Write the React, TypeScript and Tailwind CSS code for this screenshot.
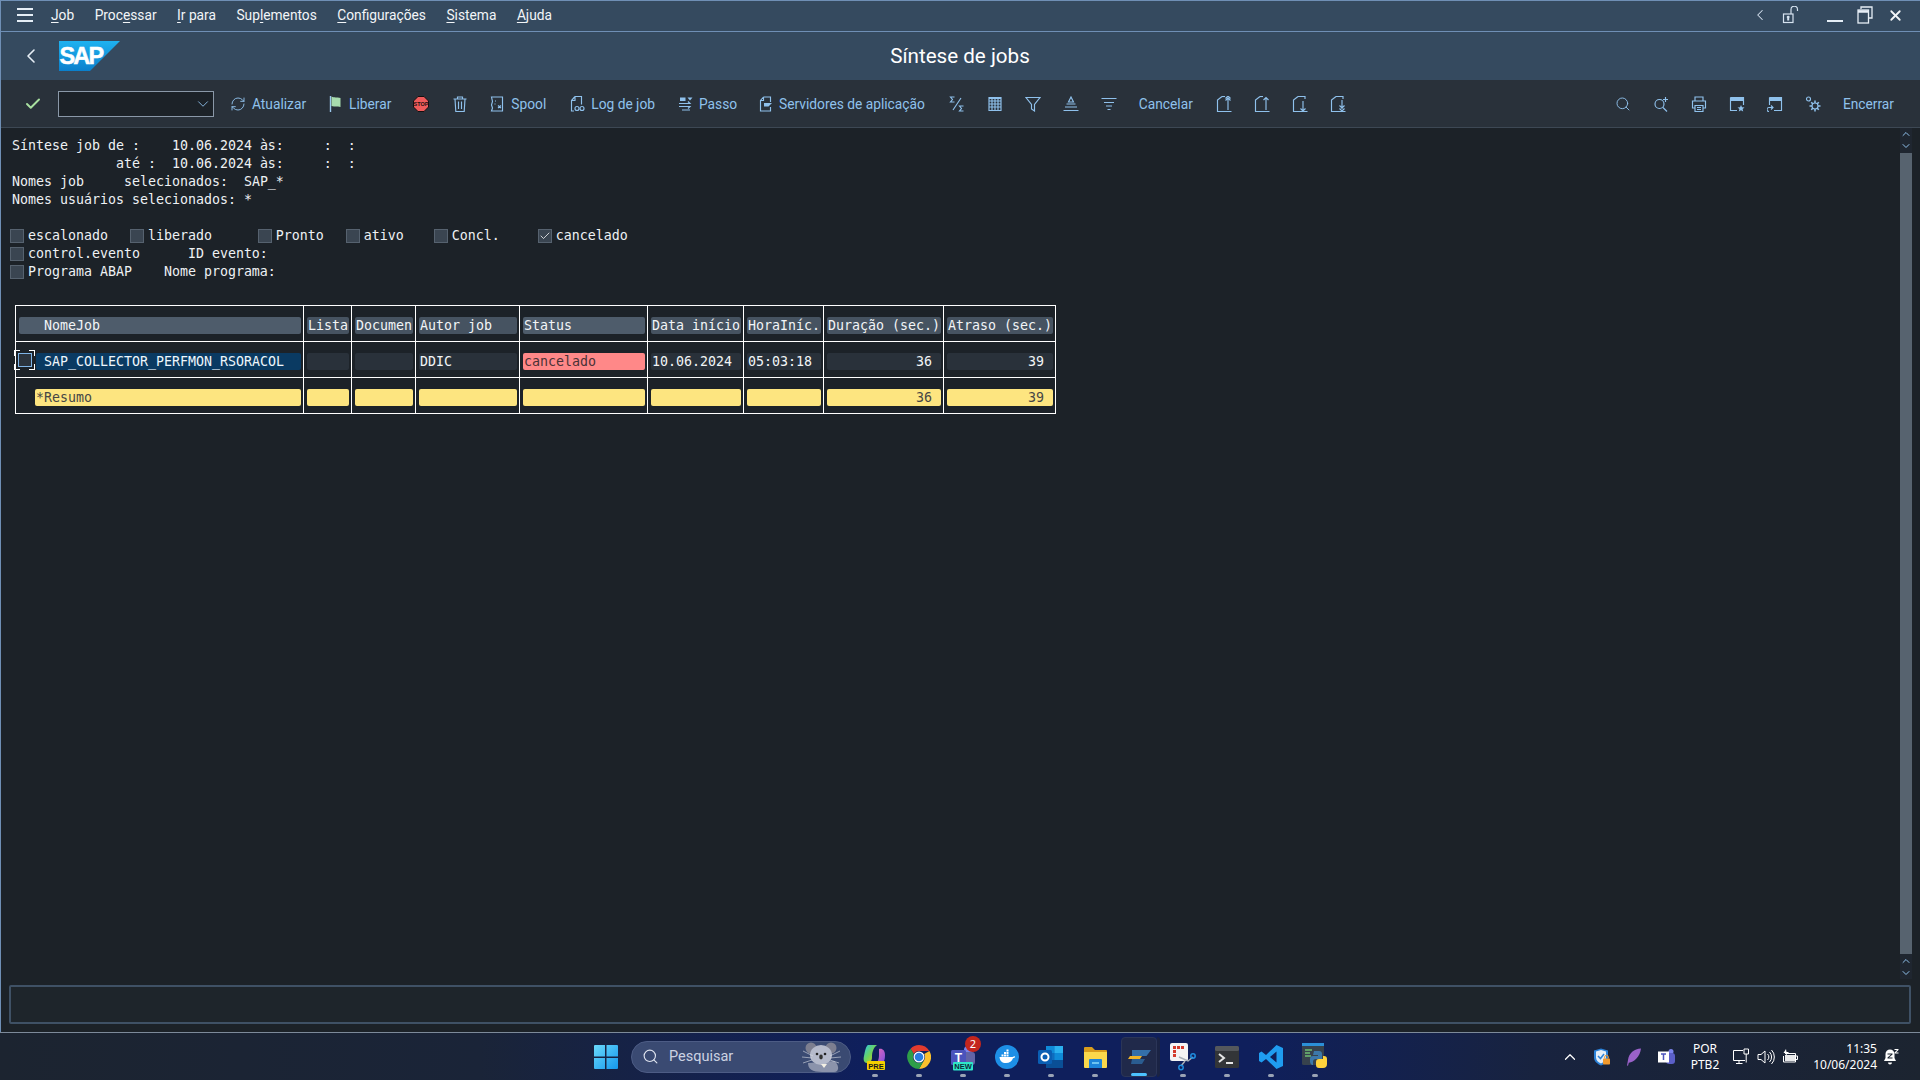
import React from 'react';
import { ChevronLeft, ChevronDown, ChevronUp, RefreshCw, Search, X, Check } from 'lucide-react';

const Ico: React.FC<{ children: React.ReactNode; className?: string; size?: number }> = ({ children, className = '', size = 16 }) => (
  <svg
    width={size}
    height={size}
    viewBox="0 0 16 16"
    fill="none"
    stroke="currentColor"
    strokeWidth={1.15}
    className={`shrink-0 ${className}`}
  >
    {children}
  </svg>
);

const FlagIcon = () => (
  <Ico>
    <path d="M2.500 0v16" stroke="#9cc8ee" strokeWidth={1.400} />
    <path d="M3.500 .5c3 1.500 5 .5 9 1.500v9c-3.500-1-5.500 0-9-1z" fill="#a8dcae" stroke="none" />
  </Ico>
);

const StopIcon = () => (
  <svg width={16} height={16} viewBox="0 0 16 16" className="shrink-0">
    <path d="M5 .5h6L15.500 5v6L11 15.500H5L.5 11V5z" fill="#ef5b5b" stroke="#141010" strokeWidth={1} />
    <text x={8} y={10} textAnchor="middle" fontSize={5.500} fontWeight={700} fontFamily="'Liberation Sans', sans-serif" fill="#1c1010">
      STOP
    </text>
  </svg>
);

const TrashIcon = () => (
  <Ico>
    <path d="M1.500 3h13M5.500 3V1h5v2M3 3l.8 12.500h8.400L13 3M6.500 5.500v7.500M9.500 5.500v7.500" />
  </Ico>
);

const SpoolIcon = () => (
  <Ico>
    <path d="M2.500 1h11v14h-11l1-3-1-3 1-3.500z" />
    <path d="M6 5h1M5.500 8h1M9 9.500l3 2.500M12 9.500l-3 2.500" />
  </Ico>
);

const LogIcon = () => (
  <Ico>
    <path d="M6 .5h6.500v8M6 .5L2.500 4.500V15H5M2.500 4.500H6V.5" />
    <circle cx={8} cy={12.500} r={2} />
    <circle cx={13} cy={12.500} r={2} />
  </Ico>
);

const PassoIcon = () => (
  <Ico>
    <path d="M2 1.500h5.500v3.500H2zM9.500 1.500h5L12 4.500z" fill="currentColor" stroke="none" />
    <path d="M1 7.500h11l-2-2M1 10.500h11l-2 2M4 14h8" />
  </Ico>
);

const ServerIcon = () => (
  <Ico>
    <path d="M5.500 1h7v5M5.500 1L2.500 4.500v10.500h10V11M5.500 1v3.500h-3" />
    <path d="M6 7h8l-3.500 3.500H6z" fill="currentColor" stroke="none" />
  </Ico>
);

const SumIcon = () => (
  <Ico>
    <path d="M5.500 1H1.500l2 2.500-2 2.500h4M14.500 10h-4l2 2.500-2 2.500h4M12 2L4 14" />
  </Ico>
);

const GridIcon = () => (
  <Ico>
    <path d="M2 1.500h12v13H2zM2 5h12M2 8h12M2 11h12M5 1.500v13M8 1.500v13M11 1.500v13" />
    <path d="M2 2h12" strokeWidth={2} />
  </Ico>
);

const FilterIcon = () => (
  <Ico>
    <path d="M1 1.500h14L9.500 8.500v6.500L6.500 13V8.500z" />
  </Ico>
);

const SumUpIcon = () => (
  <Ico>
    <path d="M8 1L5.500 6h5zM3.500 8h9M2 11h12M.5 14.500h15" />
  </Ico>
);

const SumDownIcon = () => (
  <Ico>
    <path d="M.5 2.500h15M3 6.500h10M5 10h6M6.500 13.500h3" />
  </Ico>
);

const PageIcon: React.FC<{ kind: 'first' | 'prev' | 'next' | 'last' }> = ({ kind }) => (
  <svg width={17} height={16} viewBox="0 0 17 16" fill="none" stroke="currentColor" strokeWidth={1.15} className="shrink-0">
    <path d="M6 .5L1.500 4v11.500h14" />
    {(kind === 'first' || kind === 'prev') && <path d="M6 .5h3" />}
    {(kind === 'next' || kind === 'last') && <path d="M6 .5h7V3" />}
    {kind === 'first' && <path d="M12 14V2M9.500 4.500L12 2l2.500 2.500M9.500 2.500L12 0l2.500 2.500" />}
    {kind === 'prev' && <path d="M12 14V1.500M9.500 4L12 1.500 14.500 4" />}
    {kind === 'next' && <path d="M11 5v10M8.500 12.500L11 15l2.500-2.500" />}
    {kind === 'last' && <path d="M12 4v9M9.500 9.500L12 12l2.500-2.500M9.500 12.500L12 15l2.500-2.500" />}
  </svg>
);

const FindNextIcon = () => (
  <Ico>
    <circle cx={6.500} cy={8} r={4.500} />
    <path d="M10 11.500l4 4M12.500 1v5M10 3.500h5" />
  </Ico>
);

const PrintIcon = () => (
  <Ico>
    <path d="M4 5V1h8v4M4 12H1.500V5h13v7H12M4 9.500h8v6H4zM6 11.500h4M6 13.500h4" />
  </Ico>
);

const LayoutStarIcon = () => (
  <Ico>
    <path d="M1.500 1.500h13V9M1.500 1.500V14.500H8" />
    <path d="M1.500 1.500h13v3.500h-13z" fill="currentColor" stroke="none" />
    <path d="M12 9l1 2.300 2.500.2-1.900 1.600.6 2.400-2.200-1.300-2.200 1.300.6-2.400-1.900-1.600 2.500-.2z" fill="currentColor" stroke="none" />
  </Ico>
);

const LayoutSwapIcon = () => (
  <Ico>
    <path d="M2.500 1.500h12v13H7M2.500 1.500V9" />
    <path d="M2.500 1.500h12v3.500h-12z" fill="currentColor" stroke="none" />
    <path d="M5.500 11.500H2a2 2 0 000 4M4 9.500l2 2-2 2" />
  </Ico>
);

const GearsIcon = () => (
  <Ico>
    <circle cx={3.500} cy={3} r={2} />
    <circle cx={10} cy={10} r={3} />
    <path d="M10 4.500V7M10 13v2.500M4.500 10H7M13 10h2.500M6.200 6.200l1.700 1.700M12.100 12.100l1.700 1.700M13.800 6.200l-1.700 1.700M7.900 12.100l-1.700 1.700" strokeWidth={1.500} />
  </Ico>
);

const LockIcon = () => (
  <svg width={18} height={18} viewBox="0 0 18 18" fill="none" stroke="#d5e2ef" strokeWidth={1.200} className="shrink-0">
    <rect x={1.500} y={8} width={9.500} height={8.500} />
    <path d="M6.200 9.800a1.300 1.300 0 011 2.300v2.400h-2v-2.400a1.300 1.300 0 011-2.300z" fill="#d5e2ef" stroke="none" />
    <path d="M9 8V3.500a3.200 3.200 0 016.500 0V5" />
  </svg>
);

const RestoreIcon = () => (
  <svg width={16} height={18} viewBox="0 0 16 18" fill="none" stroke="#e6eef6" strokeWidth={1.300} className="shrink-0">
    <path d="M4 3V1h11v11h-3" />
    <rect x={1} y={4} width={10.500} height={13} />
    <path d="M1 5.500h10.500" strokeWidth={2.500} />
  </svg>
);

const SapLogo = () => (
  <svg width={62} height={30} viewBox="0 0 62 30" className="shrink-0">
    <defs>
      <linearGradient id="sapGrad" x1="0" y1="0" x2="0" y2="1">
        <stop offset="0" stopColor="#1fb2f0" />
        <stop offset="1" stopColor="#0a80cc" />
      </linearGradient>
    </defs>
    <path d="M0 0h61L31 30H0z" fill="url(#sapGrad)" />
    <text x={0.5} y={23} fontFamily="'Liberation Sans', sans-serif" fontWeight={700} fontSize={23.500} letterSpacing={-1.800} fill="#ffffff" stroke="#ffffff" strokeWidth={0.5}>
      SAP
    </text>
  </svg>
);

const ToolBtn: React.FC<{ icon: React.ReactNode; label: string; gap: string; className: string }> = ({ icon, label, gap, className }) => (
  <div className={`flex items-center ${gap} ${className}`}>
    {icon}
    <span className="text-[13.75px] pt-px whitespace-nowrap">{label}</span>
  </div>
);

const Mnemonic: React.FC<{ before?: string; u: string; after: string }> = ({ before = '', u, after }) => (
  <span className="whitespace-pre">
    {before}
    <span className="underline underline-offset-2 decoration-1">{u}</span>
    {after}
  </span>
);

const CheckBox: React.FC<{ checked?: boolean }> = ({ checked }) => (
  <span className="inline-flex w-[2ch] h-[18px] items-center shrink-0">
    <span className="flex items-center justify-center w-[14px] h-[14px] -ml-[2px] bg-[#3a4551] border border-[#56626f] text-white">
      {checked && <Check size={12} strokeWidth={1.500} />}
    </span>
  </span>
);

const CbLabel: React.FC<{ w: string; label: string; checked?: boolean }> = ({ w, label, checked }) => (
  <span className={`flex ${w}`}>
    <CheckBox checked={checked} />
    <span className="whitespace-pre">{label}</span>
  </span>
);

const barBase = 'h-[17px] rounded-[2px] flex items-center overflow-hidden whitespace-pre leading-[17px]';

const headers: { label: string; bar: string }[] = [
  { label: 'NomeJob', bar: 'pl-[25px] bg-[#4e5c6b]' },
  { label: 'Lista', bar: 'pl-[1px] bg-[#465361]' },
  { label: 'Documen', bar: 'pl-[1px] bg-[#465361]' },
  { label: 'Autor job', bar: 'pl-[1px] bg-[#465361]' },
  { label: 'Status', bar: 'pl-[1px] bg-[#4e5c6b]' },
  { label: 'Data início', bar: 'pl-[1px] bg-[#465361]' },
  { label: 'HoraIníc.', bar: 'pl-[1px] bg-[#465361]' },
  { label: 'Duração (sec.)', bar: 'pl-[1px] bg-[#465361]' },
  { label: 'Atraso (sec.)', bar: 'pl-[1px] bg-[#465361]' },
];

const cellWrap = 'border-r border-b border-white h-[36px] pt-[11px] pl-[3px] pr-[2px]';

const TableCell: React.FC<{ bar: string; children?: React.ReactNode }> = ({ bar, children }) => (
  <div className={cellWrap}>
    <div className={`${barBase} ${bar}`}>{children}</div>
  </div>
);

const JobTable = () => (
  <div className="relative mt-[24px] ml-[3px] w-[1041px] border-t border-l border-white grid grid-cols-[288px_48px_64px_104px_128px_96px_80px_120px_112px]">
    {headers.map((h) => (
      <TableCell key={h.label} bar={`${h.bar} text-[#f2f5f7]`}>
        {h.label}
      </TableCell>
    ))}

    <TableCell bar="ml-[17px] pl-[8px] bg-[#0a3a62] text-[#eef6fc]">SAP_COLLECTOR_PERFMON_RSORACOL</TableCell>
    <TableCell bar="bg-[#29313a]" />
    <TableCell bar="bg-[#29313a]" />
    <TableCell bar="pl-[1px] bg-[#29313a] text-[#f2f5f7]">DDIC</TableCell>
    <TableCell bar="pl-[1px] bg-[#ff8888] text-[#4a3236]">cancelado</TableCell>
    <TableCell bar="pl-[1px] bg-[#29313a] text-[#f2f5f7]">10.06.2024</TableCell>
    <TableCell bar="pl-[1px] bg-[#29313a] text-[#f2f5f7]">05:03:18</TableCell>
    <TableCell bar="justify-end pr-[9px] bg-[#29313a] text-[#f2f5f7]">36</TableCell>
    <TableCell bar="justify-end pr-[9px] bg-[#29313a] text-[#f2f5f7]">39</TableCell>

    <TableCell bar="ml-[16px] pl-[1px] bg-[#fde580] text-[#454545]">*Resumo</TableCell>
    <TableCell bar="bg-[#fde580]" />
    <TableCell bar="bg-[#fde580]" />
    <TableCell bar="bg-[#fde580]" />
    <TableCell bar="bg-[#fde580]" />
    <TableCell bar="bg-[#fde580]" />
    <TableCell bar="bg-[#fde580]" />
    <TableCell bar="justify-end pr-[9px] bg-[#fde580] text-[#454545]">36</TableCell>
    <TableCell bar="justify-end pr-[9px] bg-[#fde580] text-[#454545]">39</TableCell>

    {/* row selector over the first data cell */}
    <div className="absolute left-[-2px] top-[44px] w-[21px] h-[20px]">
      <div className="absolute left-[4px] top-[3px] w-[14px] h-[14px] bg-[#2b333c] border border-[#7fb4e6]" />
      <div className="absolute left-0 top-0 w-[6px] h-[6px] border-l border-t border-white" />
      <div className="absolute right-0 top-0 w-[6px] h-[6px] border-r border-t border-white" />
      <div className="absolute left-0 bottom-0 w-[6px] h-[6px] border-l border-b border-white" />
      <div className="absolute right-0 bottom-0 w-[6px] h-[6px] border-r border-b border-white" />
    </div>
  </div>
);

const Dot = () => <span className="absolute bottom-[3px] left-1/2 -translate-x-1/2 w-[6px] h-[3px] rounded-full bg-[#9aa3b5]" />;

const TaskIcon: React.FC<{ children: React.ReactNode; active?: boolean }> = ({ children, active }) => (
  <div className="relative w-[44px] h-[47px] flex items-center justify-center">
    {active && (
      <>
        <span className="absolute left-[4px] top-[4px] w-[36px] h-[40px] rounded-[4px] bg-[#20294a] border border-[#2b3557]" />
        <span className="absolute left-[40px] top-[4px] w-[3px] h-[40px] rounded-r-[3px] bg-[#1a2344]" />
      </>
    )}
    <span className="relative flex">{children}</span>
    {!active && <Dot />}
    {active && <span className="absolute bottom-[4px] left-1/2 -translate-x-1/2 w-[16px] h-[3px] rounded-full bg-[#4cc2ff]" />}
  </div>
);

const Copilot = () => (
  <svg width={26} height={28} viewBox="0 0 26 28">
    <defs>
      <linearGradient id="copA" x1="0" y1="0" x2="1" y2="1">
        <stop offset="0" stopColor="#2bc5e8" />
        <stop offset="0.5" stopColor="#6fd35a" />
        <stop offset="1" stopColor="#f5c518" />
      </linearGradient>
      <linearGradient id="copB" x1="0" y1="0" x2="1" y2="1">
        <stop offset="0" stopColor="#f06bb8" />
        <stop offset="1" stopColor="#7b4fe0" />
      </linearGradient>
    </defs>
    <path d="M6 2h9c-4 3-5 8-5 12 0 4-2 6-5 6-3 0-4-3-3-7C3 8 4 3 6 2z" fill="url(#copA)" />
    <path d="M17 6c3-1 6 1 6 6s-1 9-6 9h-5c4-1 5-5 5-9z" fill="url(#copB)" />
    <rect x={5} y={18} width={18} height={9} rx={1} fill="#f5d000" />
    <text x={14} y={25.500} textAnchor="middle" fontSize={7.500} fontWeight={700} fontFamily="'Liberation Sans', sans-serif" fill="#1a1a1a">PRE</text>
  </svg>
);

const Chrome = () => (
  <svg width={24} height={24} viewBox="0 0 24 24">
    <path d="M12 0a12 12 0 0110.400 6H12a6 6 0 00-5.200 3L3.600 3.700A12 12 0 0112 0z" fill="#e33b2e" />
    <path d="M22.400 6A12 12 0 0112 24l5.200-9a6 6 0 000-6z" fill="#fbc02d" />
    <path d="M12 24A12 12 0 013.600 3.700L6.800 9a6 6 0 005.200 9 6 6 0 005.200-3z" fill="#2e9e48" />
    <circle cx={12} cy={12} r={5.500} fill="#fff" />
    <circle cx={12} cy={12} r={4.300} fill="#2a7de1" />
  </svg>
);

const Teams = () => (
  <div className="relative w-[26px] h-[28px]">
    <svg width={26} height={28} viewBox="0 0 26 28">
      <circle cx={18} cy={7} r={4} fill="#7b83eb" />
      <rect x={12} y={9} width={13} height={13} rx={3} fill="#6264a7" />
      <rect x={1} y={7} width={15} height={15} rx={1.500} fill="#4b53bc" />
      <text x={8.500} y={19} textAnchor="middle" fontSize={12} fontWeight={700} fontFamily="'Liberation Sans', sans-serif" fill="#fff">T</text>
      <rect x={3} y={19} width={20} height={8.500} rx={1} fill="#2ee6c8" />
      <text x={13} y={26} textAnchor="middle" fontSize={7.500} fontWeight={700} fontFamily="'Liberation Sans', sans-serif" fill="#0c2a3a">NEW</text>
    </svg>
    <span className="absolute -top-[7px] -right-[5px] w-[16px] h-[16px] rounded-full bg-[#c4261d] text-white text-[11px] leading-[16px] text-center font-['Noto_Sans',sans-serif]">2</span>
  </div>
);

const Docker = () => (
  <svg width={24} height={24} viewBox="0 0 24 24">
    <circle cx={12} cy={12} r={12} fill="#1d8fe6" />
    <path d="M4.500 12h13c1 0 1.500-.8 2-1 .4.500.6 1 .3 1.500-.6.600-1.300.700-1.800.700-1 3-3.500 4.800-7 4.800-4 0-6-2-6.500-6z" fill="#fff" />
    <path d="M6.500 9.500h2v2h-2zM9 9.500h2v2H9zM11.500 9.500h2v2h-2zM9 7h2v2H9zM11.500 7h2v2h-2zM11.500 4.500h2v2h-2z" fill="#fff" />
  </svg>
);

const Outlook = () => (
  <svg width={26} height={24} viewBox="0 0 26 24">
    <rect x={8} y={1} width={17} height={22} rx={1.500} fill="#0f6cbd" />
    <rect x={8} y={1} width={8.500} height={7} fill="#0f8ad8" />
    <rect x={16.500} y={1} width={8.500} height={7} fill="#2bb0ef" />
    <rect x={16.500} y={8} width={8.500} height={7} fill="#0f8ad8" />
    <path d="M8 15h17v7a1 1 0 01-1 1H8z" fill="#0a4f96" />
    <rect x={0} y={5} width={14} height={14} rx={1.500} fill="#0a5fb4" />
    <circle cx={7} cy={12} r={3.500} fill="none" stroke="#fff" strokeWidth={2} />
  </svg>
);

const Folder = () => (
  <svg width={25} height={24} viewBox="0 0 25 24">
    <path d="M1 3a1 1 0 011-1h7l3 3h11a1 1 0 011 1v2H1z" fill="#d99d1c" />
    <path d="M1 7h23v15a1 1 0 01-1 1H2a1 1 0 01-1-1z" fill="#fbd84b" />
    <path d="M6 15a1 1 0 011-1h11a1 1 0 011 1v8H6z" fill="#1d84d8" />
    <rect x={9} y={17} width={7} height={2} fill="#6cc3f0" />
  </svg>
);

const SapGui = () => (
  <svg width={24} height={16} viewBox="0 0 24 16">
    <path d="M5 1h19l-4.500 6H5z" fill="#3b87c9" opacity={0.75} />
    <path d="M3 7h12l-2 3H1z" fill="#f0b429" />
    <path d="M5 10h13l-3 5H4z" fill="#2d6ea8" opacity={0.75} />
  </svg>
);

const Snip = () => (
  <svg width={26} height={28} viewBox="0 0 26 28">
    <rect x={0} y={0} width={18} height={18} rx={2} fill="#f4f4f4" />
    <path d="M3 3h3v3H3zM7 3h3v3H7zM11 3h3v3h-3zM3 7h3v3H3zM3 11h3v3H3z" fill="#d33a2c" />
    <path d="M9 14l9 4 5-4M15 18l-4 5" fill="none" stroke="#a8b0b8" strokeWidth={1.500} />
    <circle cx={23} cy={13} r={2.200} fill="none" stroke="#1f8fe0" strokeWidth={1.500} />
    <circle cx={11} cy={24.500} r={2.200} fill="none" stroke="#1f8fe0" strokeWidth={1.500} />
  </svg>
);

const Terminal = () => (
  <svg width={24} height={22} viewBox="0 0 24 22">
    <rect x={0} y={0} width={24} height={22} rx={1.500} fill="#333538" />
    <rect x={0} y={0} width={24} height={5} rx={1.500} fill="#55585c" />
    <path d="M4 8l5 4-5 4" fill="none" stroke="#e6e6e6" strokeWidth={2} />
    <path d="M11 17h7" stroke="#e6e6e6" strokeWidth={2} />
  </svg>
);

const VsCode = () => (
  <svg width={24} height={24} viewBox="0 0 24 24">
    <path d="M17.500 0L24 3v18l-6.500 3L7 14l-4.500 3.500L0 16V8l2.500-1.500L7 10zM17.500 6.500L11 12l6.500 5.500z" fill="#1f9cf0" />
  </svg>
);

const PyIcon = () => (
  <svg width={26} height={28} viewBox="0 0 26 28">
    <rect x={0} y={0} width={22} height={22} rx={1.500} fill="#37424d" />
    <rect x={0} y={0} width={22} height={3} fill="#2b8fd8" />
    <path d="M3 7h7M3 10h5M3 13h6" stroke="#6fbf73" strokeWidth={1.500} />
    <path d="M12 8h5a3 3 0 013 3v5h-6a3 3 0 00-3 3v3h-1a4 4 0 01-2-3v-3a3 3 0 013-3h5v-1h-5z" fill="#3c78aa" />
    <path d="M21 13h1a3 3 0 013 3v5a4 4 0 01-4 4h-4a3 3 0 01-3-3v-3a3 3 0 013-3h4z" fill="#ffd23c" />
  </svg>
);

const Koala = () => (
  <svg width={44} height={30} viewBox="0 0 44 30" className="shrink-0">
    <path d="M22 30c-10 0-14-3-14-9l26-2c5 3 6 11 0 11z" fill="#8b93ab" />
    <circle cx={11} cy={6} r={5.500} fill="#7d7f90" />
    <circle cx={31} cy={6} r={5.500} fill="#7d7f90" />
    <ellipse cx={21} cy={13} rx={11} ry={10} fill="#b5bacb" />
    <circle cx={17} cy={12} r={1.300} fill="#222" />
    <circle cx={25} cy={12} r={1.300} fill="#222" />
    <ellipse cx={21} cy={15} rx={1.800} ry={2.400} fill="#333" />
    <path d="M21 22h6l-3 4z" fill="#f4f0e4" />
    <path d="M3 9l10 5M2 15l10 1M3 21l9-3M30 14l10-5M30 16l11-1M30 18l9 3" stroke="#d8dbe4" strokeWidth={0.600} />
  </svg>
);

const ShieldTray = () => (
  <svg width={18} height={18} viewBox="0 0 18 18">
    <path d="M1 2.500l7-2 7 2v7c0 4-3.500 6.500-7 8-3.500-1.500-7-4-7-8z" fill="#2b82d9" />
    <path d="M3 3.500l5-1.500 5 1.500v6c0 3-2.500 4.800-5 6-2.500-1.200-5-3-5-6z" fill="#e4eef8" />
    <path d="M5 8l2.500 2.500L11 6" fill="none" stroke="#2b82d9" strokeWidth={1.500} />
    <rect x={10} y={10.500} width={7} height={6} rx={0.800} fill="#f29a2e" />
    <path d="M11.700 10.500V9a1.800 1.800 0 013.600 0v1.500" fill="none" stroke="#f29a2e" strokeWidth={1} />
  </svg>
);

const Feather = () => (
  <svg width={16} height={18} viewBox="0 0 16 18">
    <path d="M15 .5C8 1 3 5 2 12l-1 5.500 1 .2.800-3C8 14 14 9 15 .5z" fill="#9a62c9" />
  </svg>
);

const TeamsTray = () => (
  <svg width={17} height={17} viewBox="0 0 17 17">
    <circle cx={13} cy={3.500} r={2.500} fill="#7b83eb" />
    <rect x={8} y={5} width={9} height={11} rx={3} fill="#5b5fc7" />
    <rect x={0} y={3.500} width={11} height={11} fill="#ffffff" />
    <path d="M3 6h5M5.500 6v6" stroke="#4b53bc" strokeWidth={1.500} />
  </svg>
);

const MonitorTray = () => (
  <svg width={17} height={17} viewBox="0 0 17 17" fill="none" stroke="#fff" strokeWidth={1}>
    <path d="M10 2.500H.5V12.500H12M6 12.500v2.500M3 15.500h6.500M11 1h4.500v5H11zM13.200 6v8.500" />
  </svg>
);

const SpeakerTray = () => (
  <svg width={18} height={16} viewBox="0 0 18 16" fill="none" stroke="#fff" strokeWidth={1}>
    <path d="M1 5.500h3L8 2v12l-4-3.500H1zM10.500 5a4 4 0 010 6M12.500 3a7 7 0 010 10M14.500 1a10 10 0 010 14" />
  </svg>
);

const BatteryTray = () => (
  <svg width={17} height={16} viewBox="0 0 17 16" fill="none" stroke="#fff" strokeWidth={1}>
    <path d="M3 4.500h10.500v8.500H1.500V7M13.500 7h2v3.500h-2" />
    <path d="M4 0L1.500 4H4.500L3 7.500 7 3H4.500z" fill="#fff" stroke="none" />
    <path d="M3 6h10v6H3z" fill="#fff" fillOpacity={0.9} stroke="none" />
  </svg>
);

const BellTray = () => (
  <svg width={18} height={18} viewBox="0 0 18 18" fill="#fff">
    <path d="M7 1.500a4.500 4.500 0 00-4.500 4.500v4L1 13h12l-1.500-3V6A4.500 4.500 0 007 1.500z" />
    <path d="M5 14.500h4a2 2 0 01-4 0z" />
    <path d="M11.500 1h4v1l-2.500 2.500h2.500v1h-4v-1L14 2h-2.500z" />
    <path d="M4.500 5.500h5v1L6 9.500h3.500v1h-5v-1L8 6.500H4.500z" fill="#1c2430" />
  </svg>
);

export default function App() {
  return (
    <div className="w-[1920px] h-[1080px] overflow-hidden flex flex-col bg-[#1c2228] font-['Roboto',sans-serif] text-white">
      <div className="flex-1 min-h-0 flex flex-col border-l border-t border-[#6f8fb5]">
        {/* menu bar */}
        <div className="relative h-[31px] shrink-0 flex items-center pb-[2px] bg-[#354a5f] border-b border-[#6f8fb5] text-[13.75px] text-[#f2f5f8]">
          <div className="ml-[16px] w-[16px] flex flex-col gap-[4px]">
            <span className="h-[2px] bg-[#e6eef6]" />
            <span className="h-[2px] bg-[#e6eef6]" />
            <span className="h-[2px] bg-[#e6eef6]" />
          </div>
          <div className="flex ml-[18px] gap-[20.5px]">
            <Mnemonic u="J" after="ob" />
            <Mnemonic before="Proc" u="e" after="ssar" />
            <Mnemonic u="I" after="r para" />
            <Mnemonic before="Sup" u="l" after="ementos" />
            <Mnemonic u="C" after="onfigurações" />
            <Mnemonic u="S" after="istema" />
            <Mnemonic u="A" after="juda" />
          </div>
          <div className="ml-auto flex items-center pr-[16px]">
            <ChevronLeft size={18} strokeWidth={1.400} className="text-[#d5e2ef]" />
            <div className="ml-[13px]"><LockIcon /></div>
            <div className="ml-[27px] mt-[12px] w-[16px] h-[2px] bg-[#e6eef6]" />
            <div className="ml-[14px]"><RestoreIcon /></div>
            <X size={17} strokeWidth={2.500} className="ml-[14px] text-[#f2f5f8]" />
          </div>
        </div>

        {/* title bar */}
        <div className="h-[48px] shrink-0 grid grid-cols-[1fr_auto_1fr] items-center bg-[#354a5f]">
          <div className="flex items-center">
            <ChevronLeft size={24} strokeWidth={1.600} className="ml-[18px] text-[#e6eef6]" />
            <div className="ml-[16px]"><SapLogo /></div>
          </div>
          <div className="text-[20.6px] text-white -ml-px">Síntese de jobs</div>
          <div />
        </div>

        {/* toolbar */}
        <div className="h-[48px] shrink-0 flex items-center bg-[#29313a] border-b border-[#3d4854] text-[#8fc1ec]">
          <Check size={18} strokeWidth={2.600} className="ml-[23px] text-[#a8e0a0]" />
          <div className="ml-[16px] w-[156px] h-[26px] flex items-center justify-end pr-[1px] border border-[#8a98a8] bg-[#1c2228]">
            <ChevronDown size={18} strokeWidth={1.200} className="text-[#8fc1ec]" />
          </div>
          <ToolBtn className="ml-[16px]" gap="gap-[6px]" icon={<RefreshCw size={16} strokeWidth={1.400} />} label="Atualizar" />
          <ToolBtn className="ml-[22px]" gap="gap-[5px]" icon={<FlagIcon />} label="Liberar" />
          <div className="ml-[22px]"><StopIcon /></div>
          <div className="ml-[23px]"><TrashIcon /></div>
          <ToolBtn className="ml-[21px]" gap="gap-[6px]" icon={<SpoolIcon />} label="Spool" />
          <ToolBtn className="ml-[23px]" gap="gap-[6px]" icon={<LogIcon />} label="Log de job" />
          <ToolBtn className="ml-[23px]" gap="gap-[5px]" icon={<PassoIcon />} label="Passo" />
          <ToolBtn className="ml-[21px]" gap="gap-[5px]" icon={<ServerIcon />} label="Servidores de aplicação" />
          <div className="ml-[24px]"><SumIcon /></div>
          <div className="ml-[22px]"><GridIcon /></div>
          <div className="ml-[22px]"><FilterIcon /></div>
          <div className="ml-[22px]"><SumUpIcon /></div>
          <div className="ml-[22px]"><SumDownIcon /></div>
          <span className="ml-[22px] pt-px text-[13.75px]">Cancelar</span>
          <div className="ml-[23px]"><PageIcon kind="first" /></div>
          <div className="ml-[21px]"><PageIcon kind="prev" /></div>
          <div className="ml-[21px]"><PageIcon kind="next" /></div>
          <div className="ml-[21px]"><PageIcon kind="last" /></div>
          <div className="ml-auto flex items-center gap-[22px] pr-[26px]">
            <Search size={16} strokeWidth={1.400} />
            <FindNextIcon />
            <PrintIcon />
            <LayoutStarIcon />
            <LayoutSwapIcon />
            <GearsIcon />
            <span className="pt-px text-[13.75px]">Encerrar</span>
          </div>
        </div>

        {/* work area */}
        <div className="flex-1 min-h-0 flex pl-[8px] pr-[9px] pb-[8px]">
          <div className="flex-1 min-w-0 flex flex-col pt-[9px]">
            <div className="flex-1 min-h-0 flex">
              <div className="flex-1 min-w-0 pl-[3px] font-['DejaVu_Sans_Mono',monospace] text-[13.29px] leading-[18px] text-[#eef1f4]">
                <div className="whitespace-pre">Síntese job de :    10.06.2024 às:     :  :</div>
                <div className="whitespace-pre">             até :  10.06.2024 às:     :  :</div>
                <div className="whitespace-pre">Nomes job     selecionados:  SAP_*</div>
                <div className="whitespace-pre">Nomes usuários selecionados: *</div>
                <div className="h-[18px]" />
                <div className="flex">
                  <CbLabel w="w-[15ch]" label="escalonado" />
                  <CbLabel w="w-[16ch]" label="liberado" />
                  <CbLabel w="w-[11ch]" label="Pronto" />
                  <CbLabel w="w-[11ch]" label="ativo" />
                  <CbLabel w="w-[13ch]" label="Concl." />
                  <CbLabel w="w-[11ch]" label="cancelado" checked />
                </div>
                <div className="flex">
                  <CheckBox />
                  <span className="whitespace-pre">control.evento      ID evento:</span>
                </div>
                <div className="flex">
                  <CheckBox />
                  <span className="whitespace-pre">Programa ABAP    Nome programa:</span>
                </div>
                <JobTable />
              </div>

              {/* scrollbar */}
              <div className="w-[12px] -mr-[1px] -mt-[9px] -mb-[3px] flex flex-col items-center text-[#8fc1ec] bg-[#1f2630]">
                <ChevronUp size={12} strokeWidth={2} />
                <ChevronDown size={12} strokeWidth={2} />
                <div className="flex-1 w-[12px] mt-[1px] bg-[#57636f]" />
                <ChevronUp size={12} strokeWidth={2} className="mt-[1px]" />
                <ChevronDown size={12} strokeWidth={2} />
              </div>
            </div>
            <div className="mt-[9px] h-[39px] shrink-0 border-2 border-[#3f5165] rounded-[2px] bg-[#1e252b]" />
          </div>
        </div>
      </div>

      {/* taskbar */}
      <div className="h-[48px] shrink-0 flex items-center border-t border-[#7d8a9a] bg-[linear-gradient(90deg,#1c2430_0%,#1a2438_25%,#0f1f5c_45%,#0f1f5c_65%,#18233f_80%,#1c2430_100%)]">
        <svg width={24} height={24} viewBox="0 0 24 24" className="ml-[594px] shrink-0">
          <defs>
            <linearGradient id="winGrad" x1="0" y1="0" x2="1" y2="1">
              <stop offset="0" stopColor="#6ad9fb" />
              <stop offset="1" stopColor="#1497ec" />
            </linearGradient>
          </defs>
          <path d="M0 1a1 1 0 011-1h10v11.500H0zM12.500 0H23a1 1 0 011 1v10.500H12.500zM0 13h11v11H1a1 1 0 01-1-1zM12.500 13H24v10a1 1 0 01-1 1H12.500z" fill="url(#winGrad)" />
        </svg>
        <div className="ml-[13px] w-[220px] h-[32px] flex items-center rounded-full bg-[#3a4a72] border border-[#4d5c85] pl-[10px] pr-[6px]">
          <Search size={17} strokeWidth={1.600} className="text-[#dfe4ef]" />
          <span className="ml-[10px] text-[14.5px] text-[#ccd2e2]">Pesquisar</span>
          <div className="ml-auto"><Koala /></div>
        </div>
        <div className="ml-[2px] flex items-center">
          <TaskIcon><Copilot /></TaskIcon>
          <TaskIcon><Chrome /></TaskIcon>
          <TaskIcon><Teams /></TaskIcon>
          <TaskIcon><Docker /></TaskIcon>
          <TaskIcon><Outlook /></TaskIcon>
          <TaskIcon><Folder /></TaskIcon>
          <TaskIcon active><SapGui /></TaskIcon>
          <TaskIcon><Snip /></TaskIcon>
          <TaskIcon><Terminal /></TaskIcon>
          <TaskIcon><VsCode /></TaskIcon>
          <TaskIcon><PyIcon /></TaskIcon>
        </div>

        <div className="ml-auto flex items-center pr-[13px] text-white font-['Noto_Sans',sans-serif] text-[12px] leading-[16px]">
          <div className="w-[32px] flex justify-center"><ChevronUp size={18} strokeWidth={1.600} /></div>
          <div className="w-[32px] flex justify-center"><ShieldTray /></div>
          <div className="w-[32px] flex justify-center"><Feather /></div>
          <div className="w-[32px] flex justify-center"><TeamsTray /></div>
          <div className="w-[46px] text-center"><div>POR</div><div>PTB2</div></div>
          <div className="w-[26px] flex justify-center"><MonitorTray /></div>
          <div className="w-[24px] flex justify-center"><SpeakerTray /></div>
          <div className="w-[24px] flex justify-center"><BatteryTray /></div>
          <div className="w-[75px] text-right"><div>11:35</div><div>10/06/2024</div></div>
          <div className="w-[30px] flex justify-center"><BellTray /></div>
        </div>
      </div>
    </div>
  );
}
